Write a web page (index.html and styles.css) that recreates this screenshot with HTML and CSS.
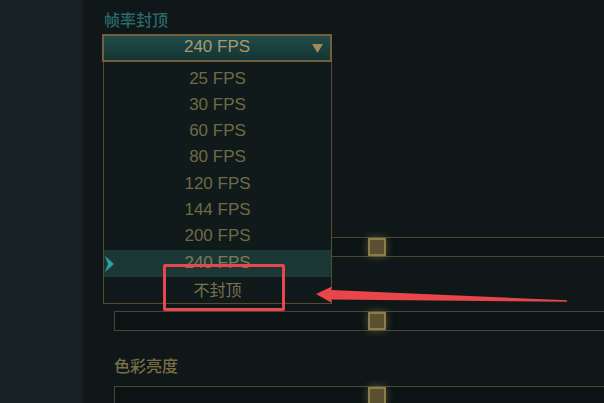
FILE: index.html
```html
<!DOCTYPE html>
<html lang="zh">
<head>
<meta charset="utf-8">
<title>帧率封顶</title>
<link rel="stylesheet" href="styles.css">
</head>
<body>
<aside class="sidebar"></aside>
<main class="content">
  <section class="field field-fps">
    <div class="label label-teal">帧率封顶</div>
    <div class="select">
      <div class="select-head">
        <span class="select-value">240 FPS</span>
        <svg class="caret" width="11" height="9" viewBox="0 0 11 9"><polygon points="0,0 11,0 5.5,9" fill="#a08a5c"/></svg>
      </div>
      <ul class="select-list">
        <li class="opt">25 FPS</li>
        <li class="opt">30 FPS</li>
        <li class="opt">60 FPS</li>
        <li class="opt">80 FPS</li>
        <li class="opt">120 FPS</li>
        <li class="opt">144 FPS</li>
        <li class="opt">200 FPS</li>
        <li class="opt active"><svg class="chev" width="10" height="16" viewBox="0 0 10 16"><polygon points="0,0 9,8 0,16 3,8" fill="#2aa39f"/></svg>240 FPS</li>
        <li class="opt uncapped">不封顶</li>
      </ul>
    </div>
  </section>
  <section class="field slider-field s1">
    <div class="label label-gold blank"></div>
    <div class="track"><span class="thumb" style="margin-left:253px"></span></div>
  </section>
  <section class="field slider-field s2">
    <div class="label label-gold blank"></div>
    <div class="track"><span class="thumb" style="margin-left:253px"></span></div>
  </section>
  <section class="field slider-field s3">
    <div class="label label-gold">色彩亮度</div>
    <div class="track"><span class="thumb" style="margin-left:253px"></span></div>
  </section>
</main>
<div class="annot-box"></div>
<svg class="annot-arrow" width="604" height="403" viewBox="0 0 604 403">
  <polygon points="316,294 332,286.5 331,290 567,300.3 567,301.7 331,299.5 332,303" fill="#e8464b"/>
</svg>
</body>
</html>
```

FILE: styles.css
```css
* { box-sizing: border-box; }
html, body { margin: 0; padding: 0; }
body {
  width: 604px;
  height: 403px;
  overflow: hidden;
  display: flex;
  background: #0f1719;
  font-family: "Liberation Sans", "Noto Sans CJK SC", sans-serif;
  position: relative;
}
.sidebar {
  width: 83px;
  flex: none;
  background: #172123;
}
.content {
  flex: 1;
  padding: 8px 0 0 19px;
  display: flex;
  flex-direction: column;
  min-width: 0;
}
.label {
  font-family: "Noto Sans CJK SC", sans-serif;
  font-size: 16px;
  font-weight: 500;
  line-height: 22px;
  height: 22px;
}
.label-teal { color: #2b6a68; padding-left: 2px; }
.label-gold { color: #7a6e45; padding-left: 12px; line-height: 19px; }
.field-fps { position: relative; z-index: 2; }
.select {
  position: relative;
  width: 230px;
  margin-top: 4px;
}
.select-head {
  height: 28px;
  border: 2px solid #735f3a;
  background: linear-gradient(#214c4a, #153432);
  display: grid;
  grid-template-columns: 1fr auto 1fr;
  align-items: center;
  padding-bottom: 2px;
}
.select-value {
  grid-column: 2;
  font-size: 17px;
  color: #a89a72;
  line-height: 22px;
}
.caret {
  grid-column: 3;
  justify-self: end;
  margin-right: 7px;
  margin-top: 2px;
}
.select-list {
  position: absolute;
  top: 100%;
  left: 1px;
  width: 229px;
  margin: 0;
  padding: 3.5px 0 1.5px 0;
  list-style: none;
  background: #101a1a;
  border: 1px solid #564a30;
  border-top: none;
}
.opt {
  position: relative;
  height: 26.25px;
  line-height: 26.25px;
  text-align: center;
  font-size: 17px;
  color: #6e6a46;
  font-family: "Liberation Sans", "Noto Sans CJK SC", sans-serif;
}
.opt.active {
  background: #1b3836;
  color: #7e7a58;
  margin-top: 1px;
  height: 27px;
  line-height: 25px;
}
.chev {
  position: absolute;
  left: 1px;
  top: 6px;
}
.opt.uncapped {
  font-family: "Noto Sans CJK SC", sans-serif;
  font-size: 16px;
  color: #7a7350;
  margin-top: -1.75px;
}
.slider-field { display: flex; flex-direction: column; }
.s1 { margin-top: 147px; }
.s2 { margin-top: 26px; }
.s3 { margin-top: 25px; }
.track {
  margin-top: 6px;
  margin-left: 12px;
  height: 20px;
  border: 1px solid #4a4431;
  border-right: none;
  background: #0c1314;
  display: flex;
  align-items: center;
}
.s3 .track { margin-top: 8px; }
.thumb {
  flex: none;
  width: 18px;
  height: 18px;
  background: #5a5132;
  border: 2px solid #8c7d4b;
  box-shadow: 0 0 8px rgba(200, 180, 90, 0.4);
}
.annot-box {
  position: absolute;
  left: 163px;
  top: 264px;
  width: 122px;
  height: 47px;
  border: 3px solid #e8474c;
  border-radius: 2px;
  z-index: 5;
}
.annot-arrow {
  position: absolute;
  left: 0;
  top: 0;
  z-index: 6;
}
```
